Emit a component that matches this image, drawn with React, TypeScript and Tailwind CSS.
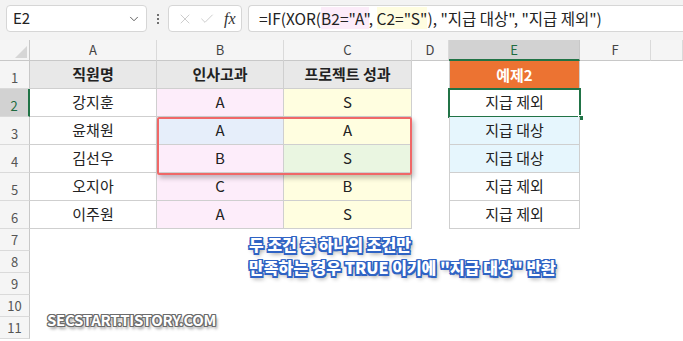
import { ChevronDown, X, Check } from 'lucide-react'

const cols = [
  { key: 'A', w: 127 },
  { key: 'B', w: 127 },
  { key: 'C', w: 128 },
  { key: 'D', w: 37 },
  { key: 'E', w: 131 },
  { key: 'F', w: 71 },
  { key: '', w: 32 },
]

const rows = [
  { name: '강지훈', hr: 'A', pj: 'S', res: '지급 제외' },
  { name: '윤채원', hr: 'A', pj: 'A', res: '지급 대상' },
  { name: '김선우', hr: 'B', pj: 'S', res: '지급 대상' },
  { name: '오지아', hr: 'C', pj: 'B', res: '지급 제외' },
  { name: '이주원', hr: 'A', pj: 'S', res: '지급 제외' },
]

const font = "font-['Segoe_UI','Noto_Sans_CJK_KR','Noto_Sans',sans-serif]"

function RowHeader({ n, h, active }: { n: number; h: string; active?: boolean }) {
  return (
    <div
      className={`w-[30px] shrink-0 ${h} flex items-end justify-center pb-[1px] text-[13px] border-b border-[#dadada] ${
        active
          ? 'bg-[#d2d2d2] text-[#1e6b40] border-r-2 border-r-[#217346]'
          : 'bg-[#f5f5f5] text-[#555] border-r border-r-[#c8c8c8]'
      }`}
    >
      {n}
    </div>
  )
}

export default function App() {
  // outlined caption text, like the annotation in the screenshot
  const outline =
    '[text-shadow:-1.5px_-1.5px_0_#2f63c4,1.5px_-1.5px_0_#2f63c4,-1.5px_1.5px_0_#2f63c4,1.5px_1.5px_0_#2f63c4,0_-1.5px_0_#2f63c4,0_1.5px_0_#2f63c4,-1.5px_0_0_#2f63c4,1.5px_0_0_#2f63c4,2px_3px_4px_rgba(0,0,0,0.45)]'
  const grayOutline =
    '[text-shadow:-1px_-1px_0_#6b6b6b,1px_-1px_0_#6b6b6b,-1px_1px_0_#6b6b6b,1px_1px_0_#6b6b6b,0_-1px_0_#6b6b6b,0_1px_0_#6b6b6b,-1px_0_0_#6b6b6b,1px_0_0_#6b6b6b,2px_3px_3px_rgba(0,0,0,0.4)]'

  return (
    <div className={`w-[683px] h-[341px] overflow-hidden bg-white relative ${font}`}>
      {/* Formula bar */}
      <div className="h-[40px] bg-[#f3f3f3] flex items-start pt-[5px] pl-[6px] gap-[6px]">
        <div className="w-[141px] h-[27px] bg-white border border-[#d6d6d6] rounded-[4px] flex items-center justify-between pl-[6px] pr-[5px] text-[15px] text-[#222]">
          <span>E2</span>
          <ChevronDown size={14} strokeWidth={1.6} className="text-[#555]" />
        </div>
        <div className="w-[9px] h-[27px] flex flex-col items-center justify-center gap-[2px]">
          <span className="w-[2px] h-[2px] bg-[#444] rounded-full" />
          <span className="w-[2px] h-[2px] bg-[#444] rounded-full" />
          <span className="w-[2px] h-[2px] bg-[#444] rounded-full" />
        </div>
        <div className="w-[74px] h-[27px] bg-white border border-[#d6d6d6] rounded-[4px] flex items-center pl-[8px] gap-[6px]">
          <X size={16} strokeWidth={1.1} className="text-[#bbb]" />
          <Check size={16} strokeWidth={1.1} className="text-[#bbb]" />
          <span className="ml-[3px] italic text-[16px] text-[#333] font-['Liberation_Serif',serif]">fx</span>
        </div>
        <div className="flex-1 h-[27px] bg-white border border-[#d6d6d6] border-r-0 rounded-l-[4px] flex items-center pl-[10px] text-[15.5px] text-[#222] whitespace-pre">
          <span>
            =IF(XOR(<span className="bg-[#fcecf9]">B2="A"</span>, <span className="bg-[#fffde0]">C2="S"</span>), "지급 대상", "지급 제외")
          </span>
        </div>
      </div>

      {/* Column headers */}
      <div className="flex h-[21px] text-[13px] text-[#444]">
        <div className="w-[30px] shrink-0 bg-[#f5f5f5] border-r border-b border-[#c8c8c8] relative">
          <div className="absolute right-[2px] bottom-[2px] w-0 h-0 border-l-[12px] border-l-transparent border-b-[12px] border-b-[#d6d6d6]" />
        </div>
        {cols.map((c, idx) => (
          <div
            key={idx}
            style={{ width: c.w }}
            className={`shrink-0 flex items-center justify-center border-r ${
              c.key === 'E'
                ? 'bg-[#d2d2d2] text-[#1e6b40] border-r-[#c8c8c8] border-b-2 border-b-[#217346]'
                : 'bg-[#f5f5f5] border-r-[#dadada] border-b border-b-[#c8c8c8]'
            }`}
          >
            {c.key}
          </div>
        ))}
      </div>

      {/* Row 1 */}
      <div className="flex h-[28px] text-[15px]">
        <RowHeader n={1} h="h-[28px]" />
        <div className="w-[127px] shrink-0 bg-[#e8e8e8] border-r border-b border-[#cfcfcf] flex items-center justify-center font-bold text-[#222]">직원명</div>
        <div className="w-[127px] shrink-0 bg-[#e8e8e8] border-r border-b border-[#cfcfcf] flex items-center justify-center font-bold text-[#222]">인사고과</div>
        <div className="w-[128px] shrink-0 bg-[#e8e8e8] border-r border-b border-[#cfcfcf] flex items-center justify-center font-bold text-[#222]">프로젝트 성과</div>
        <div className="w-[37px] shrink-0" />
        <div className="w-[131px] shrink-0 bg-[#ec7332] border-r border-l border-[#cfcfcf] flex items-center justify-center font-bold text-white">예제2</div>
      </div>

      {rows.map((r, i) => {
        const hrBg = i === 1 ? 'bg-[#e6eefa]' : 'bg-[#fdedfa]'
        const pjBg = i === 2 ? 'bg-[#eaf6e1]' : 'bg-[#fffee0]'
        const resBg = i === 1 || i === 2 ? 'bg-[#e6f6fd]' : 'bg-white'
        return (
          <div key={i} className="flex h-[28px] text-[15px] text-[#222]">
            <RowHeader n={i + 2} h="h-[28px]" active={i === 0} />
            <div className="w-[127px] shrink-0 bg-white border-r border-b border-[#cfcfcf] flex items-center justify-center">{r.name}</div>
            <div className={`w-[127px] shrink-0 ${hrBg} border-r border-b border-[#cfcfcf] flex items-center justify-center`}>{r.hr}</div>
            <div className={`w-[128px] shrink-0 ${pjBg} border-r border-b border-[#cfcfcf] flex items-center justify-center`}>{r.pj}</div>
            <div className="w-[37px] shrink-0" />
            <div className={`w-[131px] shrink-0 ${resBg} border-r border-l border-b border-[#cfcfcf] flex items-center justify-center relative`}>
              {r.res}
              {i === 0 && (
                <>
                  <div className="absolute left-[-2px] top-[-1px] right-[-2px] bottom-[-2px] border-2 border-[#217346]" />
                  <div className="absolute right-[-5px] bottom-[-5px] w-[6px] h-[6px] bg-[#217346] border border-white" />
                </>
              )}
            </div>
          </div>
        )
      })}

      {[7, 8, 9, 10, 11].map((n) => (
        <div key={n} className="flex h-[22px]">
          <RowHeader n={n} h="h-[22px]" />
        </div>
      ))}

      {/* Red highlight box over B3:C4 */}
      <div className="absolute left-[157px] top-[117px] w-[255px] h-[58px] border-2 border-[#f06868] rounded-[2px] shadow-[2px_3px_5px_rgba(0,0,0,0.25)]" />

      {/* Annotation */}
      <div className={`absolute left-[249px] top-[233px] text-[16px] leading-[23px] font-black text-white ${outline}`}>
        <div>두 조건 중 하나의 조건만</div>
        <div>만족하는 경우 TRUE 이기에 "지급 대상" 반환</div>
      </div>

      <div className={`absolute left-[47px] top-[309px] text-[15px] font-bold text-white tracking-[-0.3px] ${grayOutline}`}>
        SECSTART.TISTORY.COM
      </div>
    </div>
  )
}
